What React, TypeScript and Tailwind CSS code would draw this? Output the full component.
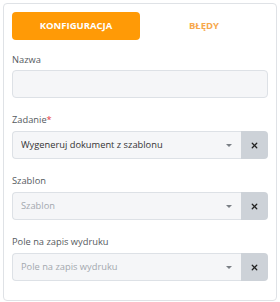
import { X } from "lucide-react";

type SelectProps = {
  value?: string;
  placeholder: string;
};

function SelectField({ value, placeholder }: SelectProps) {
  return (
    <div className="flex h-7 w-full">
      <div className="flex flex-1 items-center rounded-l-[4px] border border-r-0 border-[#dde1e6] bg-[#f5f6f8] pl-[8px] pr-[9px]">
        <span
          className={
            value
              ? "flex-1 truncate text-[9.3px] text-[#333]"
              : "flex-1 truncate text-[9.3px] text-[#a3a8ae]"
          }
        >
          {value ?? placeholder}
        </span>
        {/* caret */}
        <span className="h-0 w-0 border-x-[3px] border-t-[3px] border-x-transparent border-t-[#7a7f85]" />
      </div>
      <button className="flex w-[27px] items-center justify-center rounded-r-[4px] bg-[#cdd2d8]">
        <X size={9} strokeWidth={3.5} className="text-[#222]" />
      </button>
    </div>
  );
}

function Label({ text, required }: { text: string; required?: boolean }) {
  return (
    <label className="mb-[4px] block text-[9.3px] leading-[14px] text-[#555a60]">
      {text}
      {required && <span className="text-[#e5393f]">*</span>}
    </label>
  );
}

export default function App() {
  return (
    <div
      className="w-[280px] bg-white p-[3px]"
      style={{ fontFamily: '"Open Sans", "Noto Sans", sans-serif' }}
    >
      <div className="rounded-[4px] border border-[#dfe2e6] px-2 pt-2 pb-[19px]">
        {/* Tabs */}
        <div className="grid h-7 grid-cols-2">
          <button className="rounded-[4px] bg-[#ff9a06] text-[9.5px] font-bold text-white">
            KONFIGURACJA
          </button>
          <button className="text-[9.5px] font-bold text-[#f7a84c]">
            BŁĘDY
          </button>
        </div>

        <div className="mt-[12px] flex flex-col gap-[15px]">
          <div>
            <label className="mb-[3px] block text-[9.3px] leading-[15px] text-[#555a60]">
              Nazwa
            </label>
            <input
              className="block h-7 w-full rounded-[4px] border border-[#dde1e6] bg-[#f5f6f8] px-2 text-[9.3px] outline-none"
              type="text"
            />
          </div>

          <div>
            <Label text="Zadanie" required />
            <SelectField
              value="Wygeneruj dokument z szablonu"
              placeholder="Zadanie"
            />
          </div>

          <div>
            <Label text="Szablon" />
            <SelectField placeholder="Szablon" />
          </div>

          <div>
            <Label text="Pole na zapis wydruku" />
            <SelectField placeholder="Pole na zapis wydruku" />
          </div>
        </div>
      </div>
    </div>
  );
}
